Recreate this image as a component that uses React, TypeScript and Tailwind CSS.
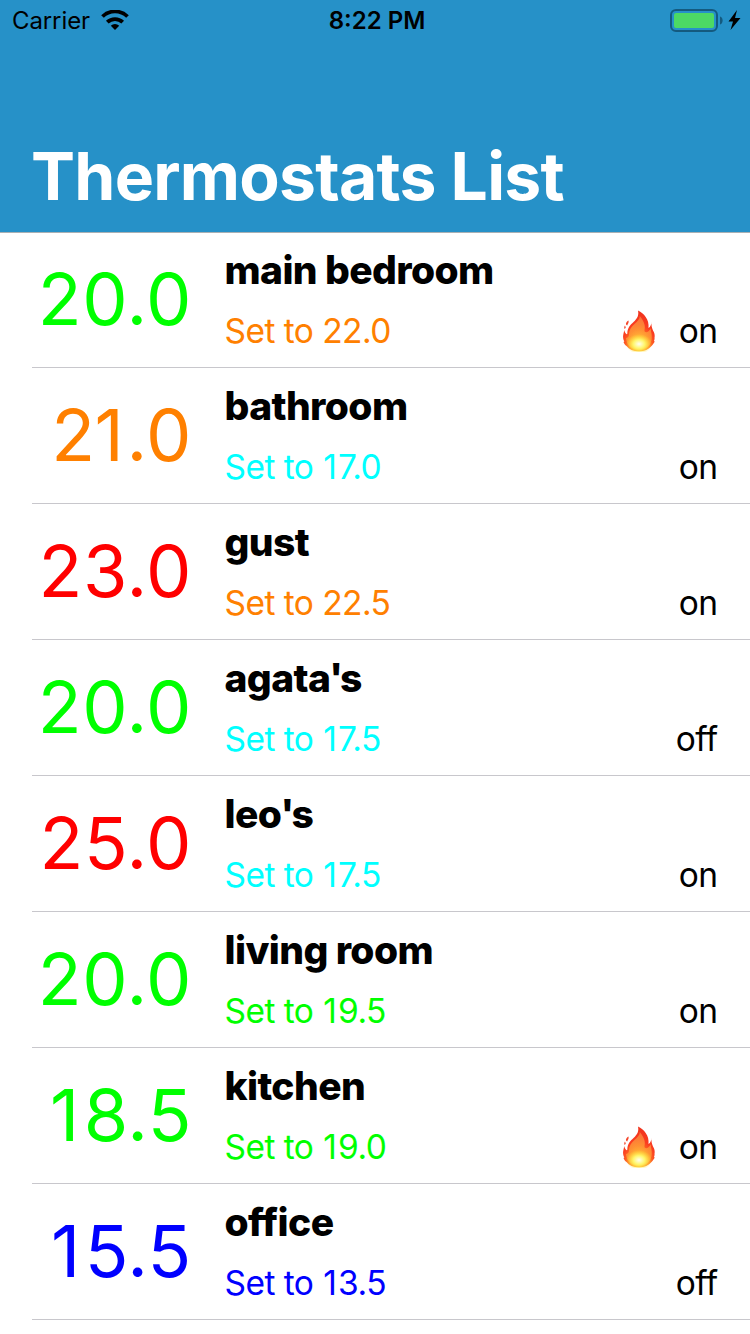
type Row = { temp: string; color: string; name: string; set: string; setColor: string; state: string; fire?: boolean };

const rows: Row[] = [
  { temp: "20.0", color: "text-[#00ff00]", name: "main bedroom", set: "22.0", setColor: "text-[#ff8000]", state: "on", fire: true },
  { temp: "21.0", color: "text-[#ff8000]", name: "bathroom", set: "17.0", setColor: "text-[#00ffff]", state: "on" },
  { temp: "23.0", color: "text-[#ff0000]", name: "gust", set: "22.5", setColor: "text-[#ff8000]", state: "on" },
  { temp: "20.0", color: "text-[#00ff00]", name: "agata's", set: "17.5", setColor: "text-[#00ffff]", state: "off" },
  { temp: "25.0", color: "text-[#ff0000]", name: "leo's", set: "17.5", setColor: "text-[#00ffff]", state: "on" },
  { temp: "20.0", color: "text-[#00ff00]", name: "living room", set: "19.5", setColor: "text-[#00ff00]", state: "on" },
  { temp: "18.5", color: "text-[#00ff00]", name: "kitchen", set: "19.0", setColor: "text-[#00ff00]", state: "on", fire: true },
  { temp: "15.5", color: "text-[#0000ff]", name: "office", set: "13.5", setColor: "text-[#0000ff]", state: "off" },
];

// Gives narrow characters their own spacing: "1" is widened, an apostrophe tightened.
function Spaced({ text }: { text: string }) {
  return (
    <>
      {text.split(/(1|')/).map((part, i) =>
        part === "1" ? <span key={i} className={text.startsWith("1") ? "pl-[0.03em] pr-[0.055em]" : "-ml-[0.02em] pr-[0.03em]"}>1</span>
        : part === "'" ? <span key={i} className="-mr-[0.06em]">'</span>
        : part
      )}
    </>
  );
}

function Flame() {
  return (
    <svg width="34" height="42" viewBox="0 0 34 42" className="mr-[23px] -mt-px">
      <defs>
        <radialGradient id="flame" cx="0.5" cy="0.9" r="0.85">
          <stop offset="0" stopColor="#ffc02a" />
          <stop offset="0.4" stopColor="#ff7424" />
          <stop offset="0.65" stopColor="#fa3d20" />
          <stop offset="1" stopColor="#f0331d" />
        </radialGradient>
        <radialGradient id="flameMiddle" cx="0.5" cy="0.9" r="0.9">
          <stop offset="0" stopColor="#ffe23c" />
          <stop offset="0.55" stopColor="#ff9a36" />
          <stop offset="1" stopColor="#fb7a40" />
        </radialGradient>
        <radialGradient id="flameCore">
          <stop offset="0" stopColor="#fffef0" />
          <stop offset="0.45" stopColor="#fff56a" />
          <stop offset="1" stopColor="#ffdd30" stopOpacity="0" />
        </radialGradient>
      </defs>
      <path fill="url(#flame)" d="M16 .5C22 3.500 27.500 9.500 26.500 18c2-1 3-4 3-6.500C29 15 30 18 31 20.500 32.500 23 33 25 32.500 28c.3 1-.2 2-.5 3 .5 0 .5.500.5 1-1 1.500-1.500 2.500-3 4-3 3.500-7 5.300-12.500 5.300S7 39.500 4.500 36C3 35 2 33.500 1.500 32l.8-.4C1.300 29.500 .7 27 1.300 24.500l1-4.500c.2 1.500.8 2.500 1.500 3.500.7 1 1.500 1 1.500 0C5.500 18 8 15 11.500 12 15.500 8.500 17 5 16 .5Z" />
      <path fill="#f4472c" d="M6.500 10.500c.6 2.500-.7 3-1.300 5C3 14.500 4 12 6.500 10.500ZM3 15.500l.8 2-1 1.500C1.800 18 2.300 16.500 3 15.500Z" />
      <path fill="url(#flameMiddle)" d="M17.800 6c3 4 6.200 8.500 4.700 14-.3 2.300 2 3 4 1.300 1-.8 1.800-2 2.200-3 .2 3.500 1.300 6 1 9.700C29.500 34 26 39.500 17 39.500S4.500 34 4 28c1.500 0 3-1.500 3-3.500 0-4.500 2-7.500 5.500-10.500 3.200-2.700 5.300-5 5.300-8Z" opacity=".85" />
      <ellipse cx="17" cy="34" rx="13" ry="10" fill="url(#flameCore)" />
    </svg>
  );
}

export default function App() {
  return (
    <div className="flex h-[1334px] w-[750px] flex-col overflow-hidden bg-white font-[Inter,sans-serif] text-black">
      <header className="flex h-[233px] shrink-0 flex-col justify-between border-b border-[#a9b0b4] bg-[#2691c8]">
        <div className="grid h-[41px] grid-cols-3 items-center pl-3 pr-[9px] text-[24px]">
          <div className="flex items-center gap-[11px]">
            <span className="tracking-[-0.1px]">Carrier</span>
            <svg width="28" height="20" viewBox="0 0 28 20" fill="none" stroke="#000" strokeWidth="3.8" className="-mt-[2px]">
              <path d="M1.500 6.500a18 18 0 0 1 25 0M6.300 12.200a11 11 0 0 1 15.400 0" />
              <path d="M14 20l-4.200-4.300a6 6 0 0 1 8.400 0Z" fill="#000" stroke="none" />
            </svg>
          </div>
          <span className="pl-px text-center font-semibold">8:22 PM</span>
          <svg className="justify-self-end" width="72" height="24" viewBox="0 0 72 24">
            <rect x="2" y="1" width="46" height="21" rx="5" fill="none" stroke="#145a7f" strokeWidth="2" />
            <rect x="5" y="4" width="40" height="15" rx="2" fill="#4cd964" />
            <path d="M51 7.500c3.500 1 3.500 7 0 8Z" fill="#145a7f" />
            <path d="M68 1L59.500 12.500h4.500l-2.500 8.500 10-12h-5.500Z" fill="#000" />
          </svg>
        </div>
        <h1 className="mb-[13px] pl-[31px] text-[66px] font-bold leading-[86px] tracking-[-0.75px] text-white">Thermostats List</h1>
      </header>
      <main className="-mt-px pl-8">
        {rows.map((r) => (
          <div key={r.name} className="flex h-[136px] border-b border-[#c8c7cc]">
            <div className={`w-[160px] pt-[21px] text-right text-[72px] leading-[92px] tracking-[0.6px] ${r.color}`}><Spaced text={r.temp} /></div>
            <div className="flex flex-1 flex-col pl-[32.5px] pr-[32.5px]">
              <div className="mt-[14px] text-[39px] font-extrabold leading-[48px] tracking-[-0.6px]"><Spaced text={r.name} /></div>
              <div className="mt-[13px] flex h-[48px] items-center justify-between text-[33.5px]">
                <span className={`tracking-[-0.55px] ${r.setColor}`}>Set to <Spaced text={r.set} /></span>
                <span className="flex items-center">{r.fire && <Flame />}<span className="tracking-[-0.6px]">{r.state}</span></span>
              </div>
            </div>
          </div>
        ))}
      </main>
    </div>
  );
}
